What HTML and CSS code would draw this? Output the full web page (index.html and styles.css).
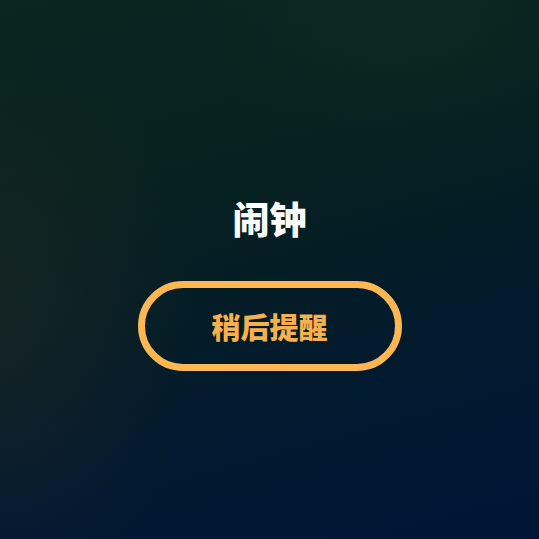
FILE: index.html
```html
<!DOCTYPE html>
<html lang="zh">
<head>
<meta charset="utf-8">
<link rel="stylesheet" href="styles.css">
</head>
<body>
<main class="screen">
  <h1 class="title">闹钟</h1>
  <button class="snooze">稍后提醒</button>
</main>
</body>
</html>
```
FILE: styles.css
```css
html, body {
  margin: 0;
  padding: 0;
  width: 539px;
  height: 539px;
  overflow: hidden;
}
.screen {
  box-sizing: border-box;
  width: 539px;
  height: 539px;
  padding-top: 196px;
  display: flex;
  flex-direction: column;
  align-items: center;
  font-family: "Noto Sans CJK SC", "Noto Sans", sans-serif;
  background:
    radial-gradient(ellipse 200px 280px at 0px 320px, rgba(38, 42, 36, 0.5), rgba(38, 42, 36, 0) 100%),
    radial-gradient(ellipse 220px 120px at 400px 20px, rgba(24, 48, 40, 0.35), rgba(24, 48, 40, 0) 100%),
    linear-gradient(165deg, #0a2621 0%, #07221f 30%, #031c27 55%, #011833 80%, #011636 100%);
}
.title {
  margin: 0;
  font-size: 37px;
  line-height: 44px;
  font-weight: 900;
  color: #ffffff;
}
.snooze {
  margin-top: 41px;
  box-sizing: border-box;
  width: 264px;
  height: 90px;
  border: 7px solid #fcb752;
  border-radius: 45px;
  background: transparent;
  color: #f6b04c;
  font-family: "Noto Sans CJK SC", "Noto Sans", sans-serif;
  font-size: 29px;
  font-weight: 900;
  padding: 0;
  display: flex;
  align-items: center;
  justify-content: center;
}
```
